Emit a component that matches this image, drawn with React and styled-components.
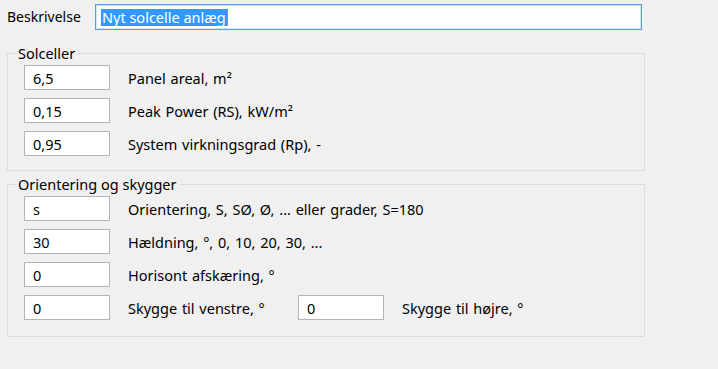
import React from 'react';
import styled, { createGlobalStyle } from 'styled-components';

const GlobalStyle = createGlobalStyle`
    html, body {
        margin: 0;
        padding: 0;
        background: #f0f0f0;
    }
    body {
        font-family: "Noto Sans", "Open Sans", Arial, sans-serif;
        font-size: 14.5px;
        color: #000;
    }
`;

const Page = styled.div`
    width: 718px;
    height: 369px;
    box-sizing: border-box;
    padding: 4px 0 0 7px;
    display: flex;
    flex-direction: column;
`;

const TopRow = styled.div`
    display: flex;
    align-items: center;
    width: 635px;
`;

const TopLabel = styled.span`
    width: 88px;
    flex: none;
    font-size: 14px;
    line-height: 16px;
`;

const DescBox = styled.div`
    flex: 1;
    height: 26px;
    box-sizing: border-box;
    background: #fff;
    border: 1px solid #5a9ae6;
    box-shadow: inset 0 0 0 1px #d2e4f8;
    display: flex;
    align-items: center;
    padding-left: 5px;
`;

const Selected = styled.span`
    background: #3399ff;
    color: #fff;
    line-height: 17px;
    padding: 0 1px;
    border-right: 1px solid #e07a20;
`;

const Group = styled.fieldset`
    width: 638px;
    box-sizing: border-box;
    margin: ${p => p.$top}px 0 0 0;
    padding: 4px 16px ${p => p.$bottom}px 16px;
    border: 1px solid #dcdcdc;
    display: flex;
    flex-direction: column;
    gap: 8px;
`;

const Legend = styled.legend`
    margin-left: -8px;
    padding: 0 2px;
    line-height: 16px;
`;

const Row = styled.div`
    display: flex;
    align-items: center;
`;

const Field = styled.div`
    width: 86px;
    height: 25px;
    flex: none;
    box-sizing: border-box;
    background: #fff;
    border: 1px solid #b4b4b4;
    padding-left: 8px;
    display: flex;
    align-items: center;
`;

const Label = styled.span`
    margin-left: 18px;
    width: ${p => (p.$width ? `${p.$width}px` : 'auto')};
    flex: none;
    white-space: nowrap;
    word-spacing: 1px;
`;

const solceller = [
    { value: '6,5', label: 'Panel areal, m²' },
    { value: '0,15', label: 'Peak Power (RS), kW/m²' },
    { value: '0,95', label: 'System virkningsgrad (Rp), -' },
];

const orientering = [
    { value: 's', label: 'Orientering, S, SØ, Ø, ... eller grader, S=180' },
    { value: '30', label: 'Hældning, °, 0, 10, 20, 30, ...' },
    { value: '0', label: 'Horisont afskæring, °' },
];

export default function App() {
    return (
        <>
            <GlobalStyle />
            <Page>
                <TopRow>
                    <TopLabel>Beskrivelse</TopLabel>
                    <DescBox>
                        <Selected>Nyt solcelle anlæg</Selected>
                    </DescBox>
                </TopRow>

                <Group $top={15} $bottom={14}>
                    <Legend>Solceller</Legend>
                    {solceller.map(r => (
                        <Row key={r.label}>
                            <Field>{r.value}</Field>
                            <Label>{r.label}</Label>
                        </Row>
                    ))}
                </Group>

                <Group $top={5} $bottom={16}>
                    <Legend>Orientering og skygger</Legend>
                    {orientering.map(r => (
                        <Row key={r.label}>
                            <Field>{r.value}</Field>
                            <Label>{r.label}</Label>
                        </Row>
                    ))}
                    <Row>
                        <Field>0</Field>
                        <Label $width={170}>Skygge til venstre, °</Label>
                        <Field>0</Field>
                        <Label>Skygge til højre, °</Label>
                    </Row>
                </Group>
            </Page>
        </>
    );
}
